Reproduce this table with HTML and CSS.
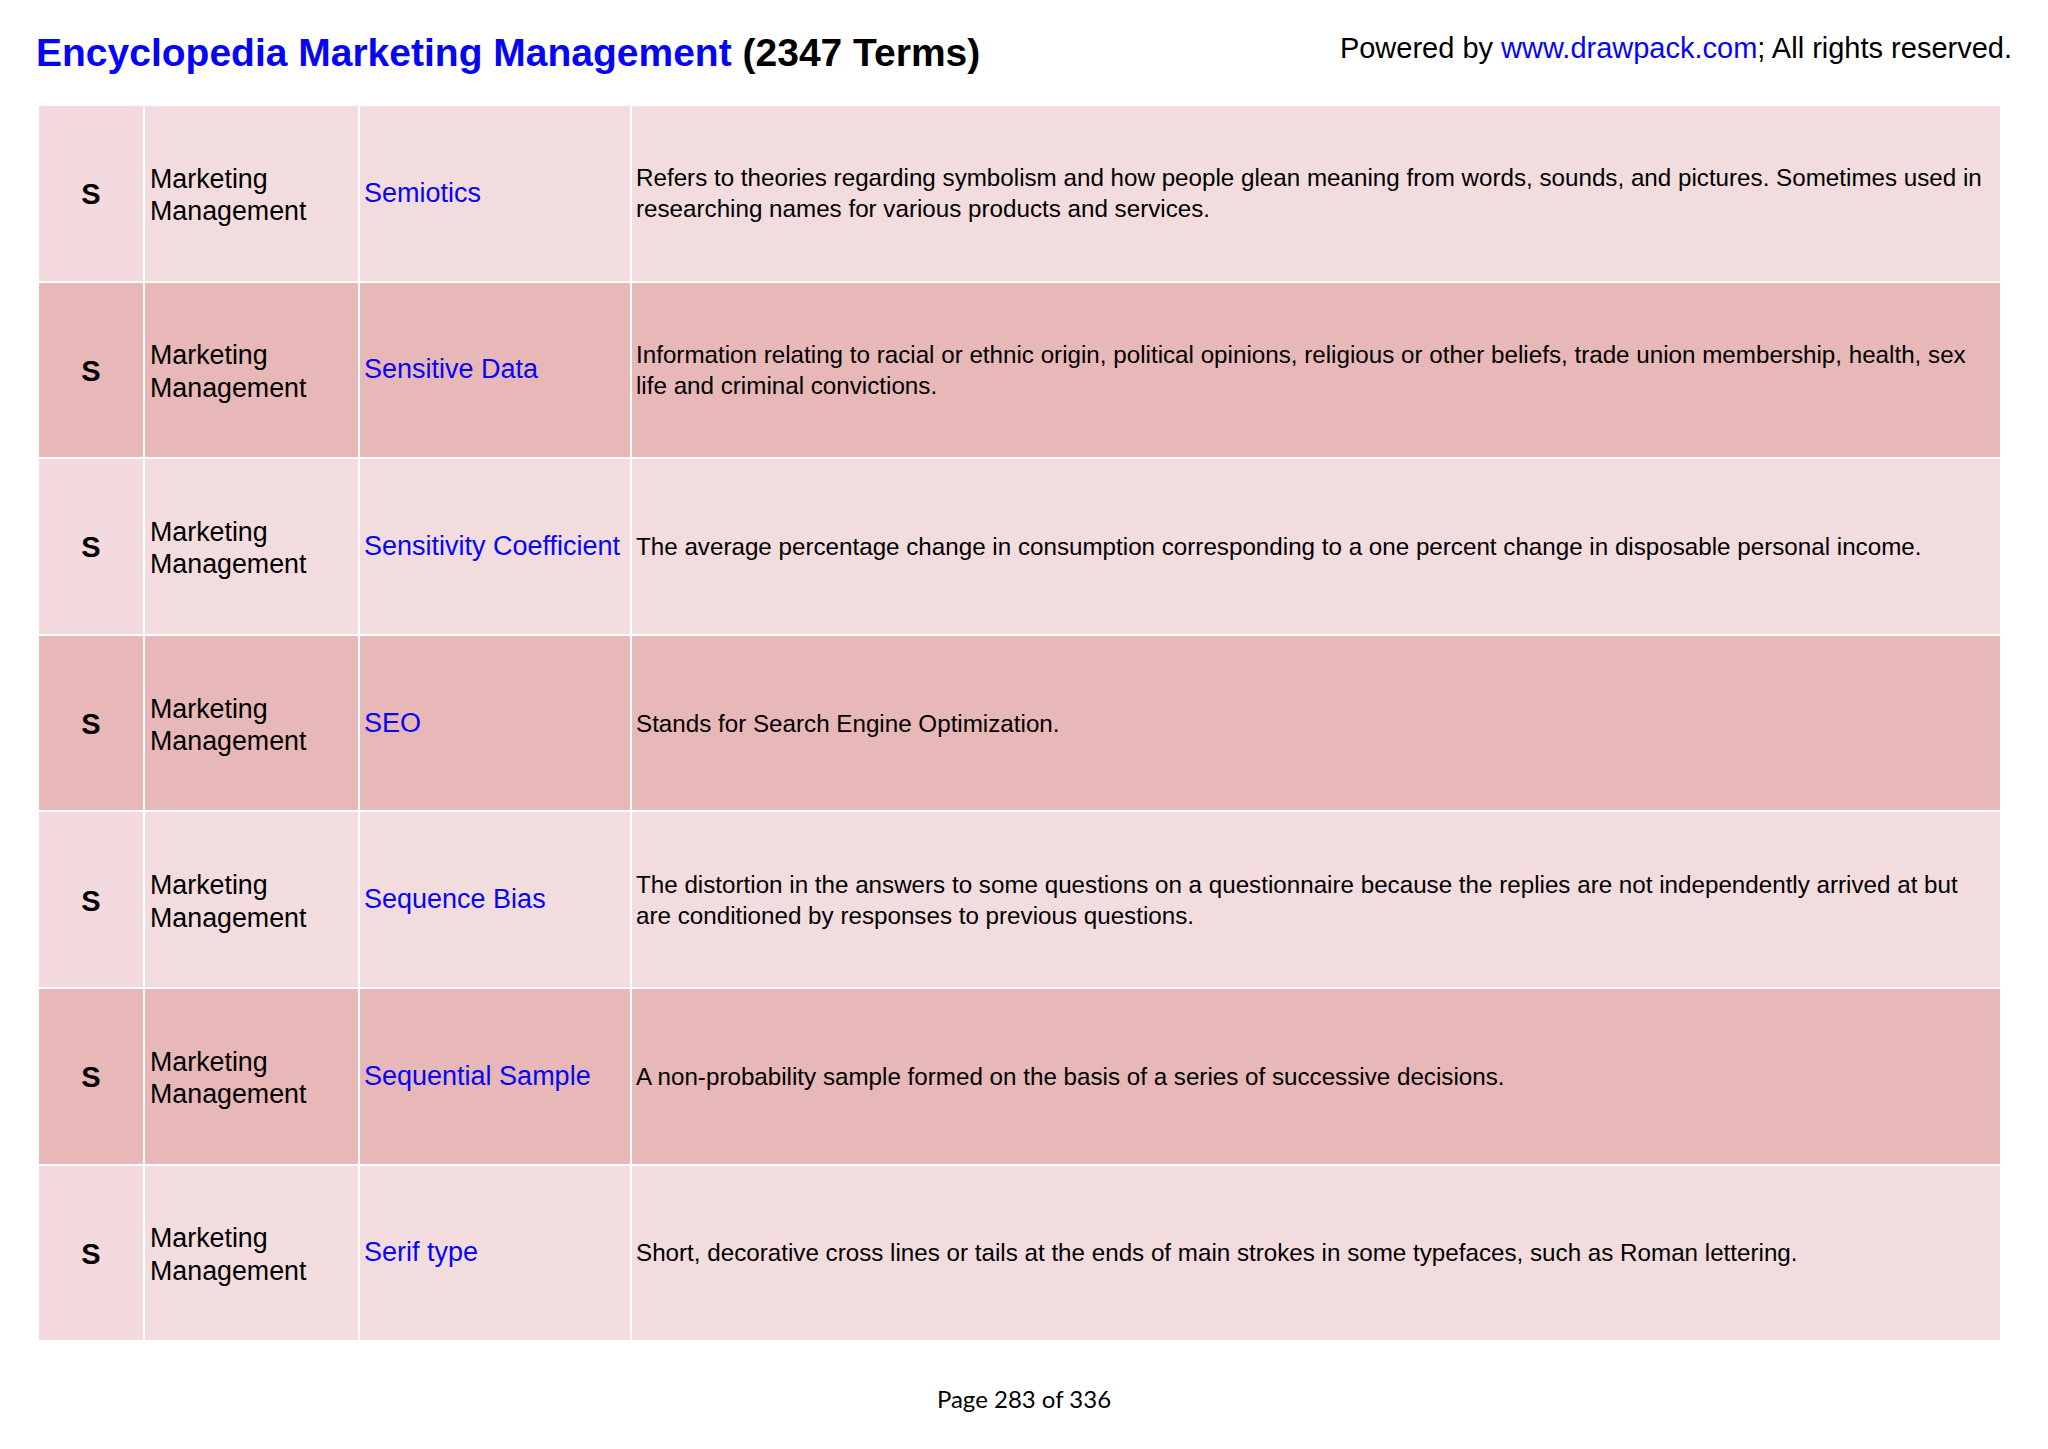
FILE: index.html
```html
<!DOCTYPE html>
<html lang="en">
<head>
<meta charset="utf-8">
<title>Encyclopedia Marketing Management</title>
<link rel="stylesheet" href="styles.css">
</head>
<body>
<header class="page-header">
  <h1 class="title"><span class="blue">Encyclopedia Marketing Management</span> (2347 Terms)</h1>
  <div class="powered">Powered by <span class="blue">www.drawpack.com</span>; All rights reserved.</div>
</header>
<main class="terms">
  <div class="row light">
    <div class="cell letter">S</div>
    <div class="cell cat">Marketing Management</div>
    <div class="cell term">Semiotics</div>
    <div class="cell desc">Refers to theories regarding symbolism and how people glean meaning from words, sounds, and pictures. Sometimes used in researching names for various products and services.</div>
  </div>
  <div class="row dark">
    <div class="cell letter">S</div>
    <div class="cell cat">Marketing Management</div>
    <div class="cell term">Sensitive Data</div>
    <div class="cell desc">Information relating to racial or ethnic origin, political opinions, religious or other beliefs, trade union membership, health, sex life and criminal convictions.</div>
  </div>
  <div class="row light">
    <div class="cell letter">S</div>
    <div class="cell cat">Marketing Management</div>
    <div class="cell term">Sensitivity Coefficient</div>
    <div class="cell desc">The average percentage change in consumption corresponding to a one percent change in disposable personal income.</div>
  </div>
  <div class="row dark">
    <div class="cell letter">S</div>
    <div class="cell cat">Marketing Management</div>
    <div class="cell term">SEO</div>
    <div class="cell desc">Stands for Search Engine Optimization.</div>
  </div>
  <div class="row light">
    <div class="cell letter">S</div>
    <div class="cell cat">Marketing Management</div>
    <div class="cell term">Sequence Bias</div>
    <div class="cell desc">The distortion in the answers to some questions on a questionnaire because the replies are not independently arrived at but are conditioned by responses to previous questions.</div>
  </div>
  <div class="row dark">
    <div class="cell letter">S</div>
    <div class="cell cat">Marketing Management</div>
    <div class="cell term">Sequential Sample</div>
    <div class="cell desc">A non-probability sample formed on the basis of a series of successive decisions.</div>
  </div>
  <div class="row light">
    <div class="cell letter">S</div>
    <div class="cell cat">Marketing Management</div>
    <div class="cell term">Serif type</div>
    <div class="cell desc">Short, decorative cross lines or tails at the ends of main strokes in some typefaces, such as Roman lettering.</div>
  </div>
</main>
<footer class="page-footer">Page 283 of 336</footer>
</body>
</html>
```
FILE: styles.css
```css
html, body {
  margin: 0;
  padding: 0;
  background: #ffffff;
}
body {
  width: 2048px;
  height: 1449px;
  font-family: "Liberation Sans", Arial, sans-serif;
  color: #000;
  overflow: hidden;
}
.blue {
  color: #0606f2;
}
.page-header {
  box-sizing: border-box;
  height: 106px;
  padding: 33px 36px 0 36px;
  display: flex;
  justify-content: space-between;
  align-items: flex-start;
}
.title {
  margin: 0;
  font-size: 39px;
  line-height: 1;
  font-weight: bold;
}
.powered {
  font-size: 29px;
  line-height: 1;
  margin-top: 1px;
}
.terms {
  margin-left: 39px;
  width: 1961px;
  display: flex;
  flex-direction: column;
  gap: 2px;
}
.row {
  display: grid;
  grid-template-columns: 104px 213px 270px 1368px;
  column-gap: 2px;
  height: 174.6px;
}
.row.light .cell {
  background: #f2dcde;
}
.row.dark .cell {
  background: #e8b7b8;
}
.row.light .letter {
  background: #f3dadf;
}
.cell {
  display: flex;
  align-items: center;
  box-sizing: border-box;
  padding: 0 5px;
}
.letter {
  justify-content: center;
  font-weight: bold;
  font-size: 29px;
  padding: 3px 0 0 0;
}
.cat {
  font-size: 26.8px;
  line-height: 32.5px;
  padding-top: 4px;
}
.term {
  font-size: 27px;
  line-height: 33px;
  color: #0606f2;
  padding-left: 4px;
}
.desc {
  font-size: 24.2px;
  line-height: 31px;
  padding-left: 4px;
  padding-right: 8px;
}
.page-footer {
  margin-top: 44px;
  text-align: center;
  font-family: Lato, "Open Sans", sans-serif;
  font-size: 24px;
  line-height: 30px;
  color: #000;
}
```
